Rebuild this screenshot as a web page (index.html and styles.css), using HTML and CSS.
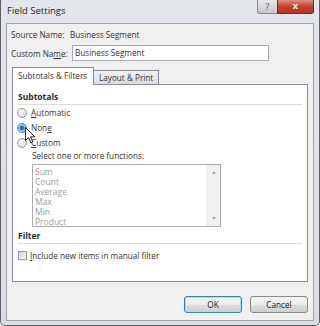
FILE: index.html
```html
<!DOCTYPE html>
<html>
<head>
<meta charset="utf-8">
<link rel="stylesheet" href="styles.css">
</head>
<body>
<div class="window">
  <div class="titlebar">
    <span class="title">Field Settings</span>
    <div class="caption-btns">
      <span class="cbtn help">?</span>
      <span class="cbtn close">x</span>
    </div>
  </div>
  <div class="client">
    <div class="row src">
      <span class="lbl">Source Name:</span>
      <span class="val">Business Segment</span>
    </div>
    <div class="row name">
      <span class="lbl">Custom Na<u>m</u>e:</span>
      <div class="input">Business Segment</div>
    </div>
    <div class="tabs">
      <div class="tab active">Subtotals &amp; Filters</div>
      <div class="tab">Layout &amp; Print</div>
    </div>
    <div class="panel">
      <div class="group">Subtotals</div>
      <div class="opt"><span class="radio"></span><span><u>A</u>utomatic</span></div>
      <div class="opt"><span class="radio on"></span><span>Non<u>e</u></span></div>
      <div class="opt"><span class="radio"></span><span><u>C</u>ustom</span></div>
      <div class="hint">Select one or more functions:</div>
      <div class="listbox">
        <ul class="items">
          <li>Sum</li><li>Count</li><li>Average</li><li>Max</li><li>Min</li><li>Product</li>
        </ul>
        <div class="scroll"><span class="arrow up"></span><span class="arrow down"></span></div>
      </div>
      <div class="group filter">Filter</div>
      <div class="opt chk"><span class="checkbox"></span><span><u>I</u>nclude new items in manual filter</span></div>
      <svg class="cursor" width="11" height="17" viewBox="0 0 11 17"><path d="M0.5 0.5 L0.5 13.5 L3.5 10.5 L5.8 15.8 L7.8 15 L5.6 9.8 L9.8 9.8 Z" fill="#fff" stroke="#222" stroke-width="1"/></svg>
    </div>
    <div class="buttons">
      <div class="btn default">OK</div>
      <div class="btn">Cancel</div>
    </div>
  </div>
</div>
</body>
</html>
```
FILE: styles.css
```css
html, body {
  margin: 0;
  padding: 0;
  background: #fff;
}
.window {
  width: 320px;
  height: 326px;
  box-sizing: border-box;
  background: linear-gradient(#e2e5e9, #dadee3);
  border: 1px solid #5f6166;
  border-top: none;
  border-radius: 0 0 5px 5px;
  display: flex;
  flex-direction: column;
  font-family: "Open Sans", "Noto Sans", sans-serif;
  font-size: 8.2px;
  color: #333;
}
.titlebar {
  height: 23px;
  display: flex;
  align-items: flex-start;
  flex: none;
}
.title {
  font-size: 9.5px;
  margin: 4px 0 0 6px;
  color: #2b2b2b;
}
.caption-btns {
  margin-left: auto;
  margin-right: 5px;
  display: flex;
}
.cbtn {
  height: 14px;
  box-sizing: border-box;
  display: flex;
  align-items: center;
  justify-content: center;
  font-family: "DejaVu Sans", sans-serif;
  font-weight: bold;
  border: 1px solid #8a8d92;
  border-top: none;
}
.help {
  width: 20px;
  border-radius: 0 0 0 3px;
  background: linear-gradient(#e6e7e9, #c7c9cc);
  color: #6d6f72;
  font-size: 9px;
  font-weight: normal;
  border-right: none;
}
.close {
  width: 37px;
  border-radius: 0 0 3px 0;
  background: linear-gradient(#dd8f7d, #c2432c 50%, #b8331c);
  border-color: #7d2a1d;
  color: #f4e5e2;
  font-size: 9px;
  padding-bottom: 2px;
}
.client {
  flex: 1;
  margin: 0 5px 4px 5px;
  border: 1px solid #a1a5ab;
  background: #f0f0f0;
  display: flex;
  flex-direction: column;
}
.row {
  display: flex;
  align-items: center;
  white-space: nowrap;
}
.src {
  margin-top: 4px;
  height: 12px;
}
.lbl {
  width: 59px;
  margin-left: 4px;
  flex: none;
}
.name {
  margin-top: 5px;
  height: 16px;
}
.input {
  margin-left: 2px;
  width: 197px;
  height: 16px;
  box-sizing: border-box;
  border: 1px solid #abadb3;
  border-top-color: #9da2aa;
  background: #fff;
  padding-left: 2px;
  line-height: 14px;
}
.tabs {
  display: flex;
  align-items: flex-end;
  margin: 6px 0 0 5px;
  height: 17px;
  position: relative;
  z-index: 1;
  white-space: nowrap;
}
.tab {
  box-sizing: border-box;
  height: 14px;
  padding: 0 5px 0 5px;
  line-height: 13px;
  border: 1px solid #898c95;
  border-bottom: none;
  background: linear-gradient(#f2f2f2, #dcdcdc);
  margin-left: -1px;
}
.tab.active {
  height: 18px;
  margin-bottom: -1px;
  margin-left: 0;
  background: #fff;
  width: 82px;
  line-height: 15px;
  padding: 0 0 0 5px;
}
.panel {
  position: relative;
  margin: 0 5px 0 5px;
  height: 198px;
  box-sizing: border-box;
  border: 1px solid #898c95;
  background: #fff;
  white-space: nowrap;
}
.group {
  font-weight: bold;
  font-size: 8.5px;
  margin: 6px 5px 0 5px;
  height: 13px;
  line-height: 12px;
  border-bottom: 1px solid #dcdcdc;
  color: #2a2a2a;
}
.opt {
  display: flex;
  align-items: center;
  height: 15px;
  margin-left: 4px;
}
.panel .opt:first-of-type {
  margin-top: 1px;
}
.radio {
  width: 10px;
  height: 10px;
  box-sizing: border-box;
  border-radius: 50%;
  border: 1px solid #9a9a9a;
  background: radial-gradient(circle at 40% 40%, #fcfcfc, #d4d4d4);
  margin-right: 4px;
  flex: none;
}
.radio.on {
  border-color: #3d7ab3;
  background: radial-gradient(circle, #1e6fc0 0, #2a80d0 2px, #9cc6ea 3px, #e8f2fb 5px);
}
.hint {
  margin: 0 0 0 19px;
  height: 12px;
  line-height: 12px;
}
.listbox {
  margin: 2px 0 0 19px;
  width: 189px;
  height: 63px;
  box-sizing: border-box;
  border: 1px solid #acacac;
  display: flex;
}
.items {
  list-style: none;
  margin: 0;
  padding: 2px 0 0 2px;
  flex: 1;
  color: #9c9c9c;
  font-size: 8.5px;
}
.items li {
  height: 10px;
  line-height: 10px;
}
.scroll {
  width: 13px;
  background: #f0f0f0;
  border-left: 1px solid #f4f4f4;
  display: flex;
  flex-direction: column;
  justify-content: space-between;
  align-items: center;
  padding: 6px 0 6px;
}
.arrow {
  width: 0;
  height: 0;
  border-left: 2.5px solid transparent;
  border-right: 2.5px solid transparent;
}
.arrow.up {
  border-bottom: 3px solid #a8a8a8;
}
.arrow.down {
  border-top: 3px solid #a8a8a8;
}
.group.filter {
  margin-top: 3px;
}
.opt.chk {
  margin-top: 4px;
  margin-left: 5px;
}
.checkbox {
  width: 9px;
  height: 9px;
  box-sizing: border-box;
  border: 1px solid #9a9a9a;
  background: linear-gradient(135deg, #d8d8d8, #f6f6f6);
  margin-right: 3px;
  flex: none;
}
.cursor {
  position: absolute;
  left: 12px;
  top: 42px;
}
.buttons {
  display: flex;
  justify-content: flex-end;
  gap: 8px;
  margin: 14px 5px 0 0;
}
.btn {
  width: 58px;
  height: 17px;
  box-sizing: border-box;
  border: 1px solid #8a8a8a;
  border-radius: 3px;
  background: linear-gradient(#f4f4f4 0, #ebebeb 50%, #dddddd 51%, #cfcfcf);
  display: flex;
  align-items: center;
  justify-content: center;
  color: #222;
}
.btn.default {
  border-color: #3c7fb1;
  box-shadow: inset 0 0 0 1px #a6dcf5;
}
```
